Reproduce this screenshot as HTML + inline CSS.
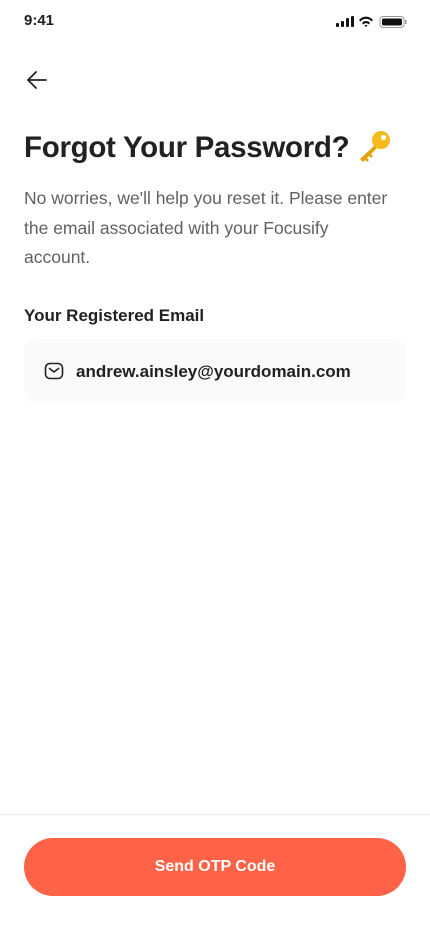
<!DOCTYPE html>
<html><head><meta charset="utf-8"><style>
*{margin:0;padding:0;box-sizing:border-box}
body{width:430px;height:932px;background:#fff;font-family:"Liberation Sans",sans-serif;color:#212121;position:relative;overflow:hidden}
.abs{position:absolute;white-space:nowrap}
</style></head><body>
<div class="abs" style="left:24px;top:12px;font-size:15px;font-weight:600">9:41</div>
<svg class="abs" style="left:336px;top:15px" width="72" height="14" viewBox="0 0 72 14">
<rect x="0" y="8" width="3" height="4" rx="1" fill="#111"/><rect x="5" y="6" width="3" height="6" rx="1" fill="#111"/><rect x="10" y="3" width="3" height="9" rx="1" fill="#111"/><rect x="15" y="1" width="3" height="11" rx="1" fill="#111"/>
<path d="M23 5 A9 9 0 0 1 37 5 L35.5 6.5 A7 7 0 0 0 24.5 6.5Z M26 8 A5 5 0 0 1 34 8 L32.5 9.5 A3 3 0 0 0 27.5 9.5Z M28.5 10.5 L30 12 L31.5 10.5 A2 2 0 0 0 28.5 10.5Z" fill="#111"/>
<rect x="44" y="1.5" width="24" height="11" rx="3" fill="none" stroke="#999" stroke-width="1"/><rect x="46" y="3.5" width="20" height="7" rx="1.5" fill="#111"/><rect x="69" y="5" width="1.5" height="4" fill="#999"/>
</svg>
<svg class="abs" style="left:26px;top:70px" width="22" height="20" viewBox="0 0 22 20"><path d="M20 10H3M10 2L2 10L10 18" fill="none" stroke="#212121" stroke-width="1.8" stroke-linecap="round" stroke-linejoin="round"/></svg>
<div class="abs" style="left:24px;top:131px;font-size:29.5px;font-weight:700;letter-spacing:-0.3px">Forgot Your Password?</div>
<svg class="abs" style="left:357px;top:130px" width="34" height="34" viewBox="0 0 34 34"><path d="M18 15 L3 29 L6 32 L8 30 L10 32 L12 30 L10 28 L12 26 L14 28 L16 26 L14 24 L21 17Z" fill="#e0a313"/><circle cx="24" cy="10" r="9" fill="#f5bb1a"/><circle cx="26.5" cy="7.5" r="2.6" fill="#fff"/></svg>
<div class="abs" style="left:24px;top:184px;font-size:17.5px;line-height:29.5px;color:#616161">No worries, we'll help you reset it. Please enter<br>the email associated with your Focusify<br>account.</div>
<div class="abs" style="left:24px;top:306px;font-size:17px;font-weight:600">Your Registered Email</div>
<div class="abs" style="left:24px;top:339px;width:382px;height:64px;background:#fafafa;border-radius:12px"></div>
<svg class="abs" style="left:44px;top:362px" width="20" height="18" viewBox="0 0 20 18"><rect x="1.5" y="1.5" width="17" height="15" rx="4.5" fill="none" stroke="#212121" stroke-width="1.6"/><path d="M5.5 6.5L10 10L14.5 6.5" fill="none" stroke="#212121" stroke-width="1.6" stroke-linecap="round" stroke-linejoin="round"/></svg>
<div class="abs" style="left:76px;top:362px;font-size:17px;font-weight:600">andrew.ainsley@yourdomain.com</div>
<div class="abs" style="left:0;top:814px;width:430px;height:1px;background:#eee"></div>
<div class="abs" style="left:24px;top:838px;width:382px;height:58px;background:#ff6347;border-radius:29px;color:#fff;font-size:16px;font-weight:700;text-align:center;line-height:58px">Send OTP Code</div>
</body></html>
